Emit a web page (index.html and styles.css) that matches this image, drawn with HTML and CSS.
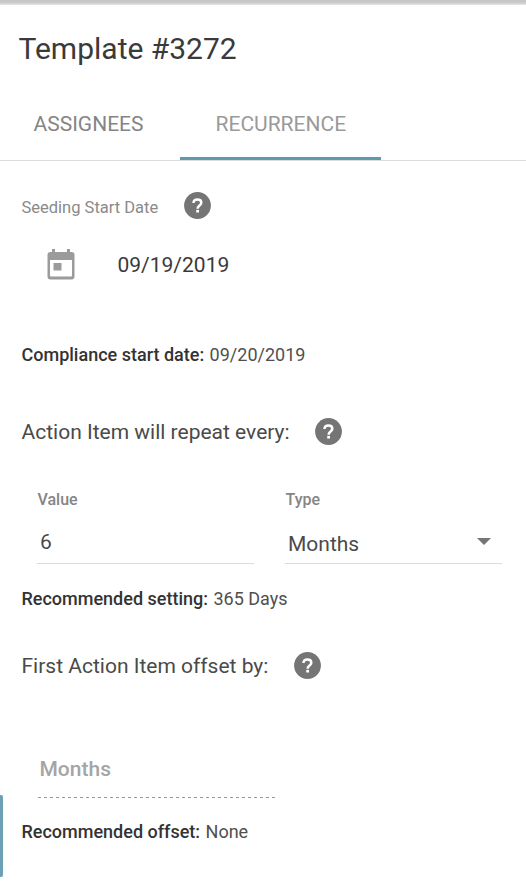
FILE: index.html
```html
<!DOCTYPE html>
<html lang="en">
  <head>
    <meta charset="UTF-8" />
    <meta name="viewport" content="width=device-width, initial-scale=1.0" />
    <title>Template #3272</title>
    <link rel="stylesheet" href="styles.css">
  </head>

  <body>
    <svg class="sprite" width="0" height="0">
      <symbol id="help" viewBox="0 0 27 27">
        <circle cx="13.5" cy="13.5" r="13.4" fill="#757575" />
        <path d="M9.500 11c0-2.200 1.600-3.500 3.900-3.500s3.900 1.200 3.900 3.200c0 2.900-3.700 2.700-3.700 6" fill="none" stroke="#fff" stroke-width="2.500" />
        <path d="M12.200 17.900h2.800v2.600h-2.800z" fill="#fff" />
      </symbol>
    </svg>

    <div class="top-shadow"></div>
    <h1 class="title"><span>Template #3272</span></h1>

    <div class="tabs">
      <div class="tab"><span>ASSIGNEES</span></div>
      <div class="tab active"><span>RECURRENCE</span></div>
    </div>

    <div class="content">
      <div class="row seeding">
        <label class="small-label">Seeding Start Date</label>
        <svg class="help"><use href="#help" /></svg>
      </div>

      <div class="row date">
        <svg class="calendar" viewBox="0 0 28 31">
          <path d="M5 0h3v3h12V0h3v3h1.500a3 3 0 0 1 3 3v21.500a3 3 0 0 1-3 3h-21a3 3 0 0 1-3-3V6a3 3 0 0 1 3-3H5zM3 11v15.500a1 1 0 0 0 1 1h20a1 1 0 0 0 1-1V11z" fill-rule="evenodd" />
          <path d="M6.500 14h8v7.500h-8z" />
        </svg>
        <span class="date-value">09/19/2019</span>
      </div>

      <p class="note compliance"><b>Compliance start date:</b> <span>09/20/2019</span></p>

      <div class="row repeat">
        <h2 class="heading">Action Item will repeat every:</h2>
        <svg class="help"><use href="#help" /></svg>
      </div>

      <div class="fields">
        <div class="field">
          <label class="field-label">Value</label>
          <div class="input"><span>6</span></div>
        </div>
        <div class="field">
          <label class="field-label">Type</label>
          <div class="input select"><span>Months</span><i class="arrow"></i></div>
        </div>
      </div>

      <p class="note setting"><b>Recommended setting:</b> <span>365 Days</span></p>

      <div class="row offset">
        <h2 class="heading">First Action Item offset by:</h2>
        <svg class="help"><use href="#help" /></svg>
      </div>

      <div class="disabled-input"><span>Months</span></div>

      <p class="note recommended"><b>Recommended offset:</b> <span>None</span></p>
    </div>

    <div class="side-tab"></div>
  </body>
</html>
```

FILE: styles.css
```css
* {
  margin: 0;
  padding: 0;
  box-sizing: border-box;
}

body {
  position: relative;
  height: 891px;
  overflow: hidden;
  background: #fff;
  color: #4a4a4a;
  font-family: Roboto, sans-serif;
}

.sprite {
  display: block;
}

.top-shadow {
  height: 5px;
  background: linear-gradient(to bottom, #c4c4c4, #cdcdcd 60%, #e8e8e8);
}

.title {
  height: 83px;
  padding: 24px 0 0 18.5px;
  font-size: 30px;
  font-weight: 400;
  line-height: 40px;
  color: #3a3a3a;
}

.tabs {
  display: flex;
  height: 73px;
  border-bottom: 1px solid #dcdcdc;
}

.tab {
  width: 180px;
  padding-left: 33.5px;
  font-size: 21px;
  line-height: 72px;
  color: #858585;
}

.tab.active {
  width: 201px;
  padding-left: 35.5px;
  border-bottom: 3px solid #5f99ad;
  color: #9a9a9a;
}

.content {
  padding-left: 21.5px;
}

.row {
  display: flex;
  align-items: center;
}

.help {
  width: 27px;
  height: 27px;
}

.seeding {
  height: 28px;
  margin-top: 30px;
  gap: 25.5px;
}

.small-label {
  padding-top: 4px;
  font-size: 16.5px;
  color: #8a8a8a;
}

.date {
  height: 40px;
  margin-top: 26px;
  padding-left: 25px;
  gap: 43px;
}

.calendar {
  width: 28px;
  height: 31px;
  margin-bottom: 2px;
  fill: #9b9b9b;
}

.date-value {
  font-size: 21px;
  color: #3a3a3a;
}

.note {
  font-size: 18px;
  line-height: 24px;
  color: #4f4f4f;
}

.note b {
  margin-right: 1px;
  font-weight: 500;
  color: #333;
}

.compliance {
  margin-top: 58px;
}

.repeat {
  height: 28px;
  margin-top: 50px;
  gap: 25px;
}

.heading {
  padding-top: 1px;
  font-size: 21px;
  font-weight: 400;
  line-height: 28px;
}

.fields {
  display: flex;
  gap: 31px;
  margin-top: 45px;
  padding-left: 15px;
}

.field {
  width: 217px;
}

.field-label {
  display: block;
  padding-left: 1px;
  font-size: 16px;
  font-weight: 500;
  line-height: 20px;
  color: #858585;
}

.input {
  display: flex;
  align-items: center;
  height: 54px;
  padding: 11px 11px 0 3.5px;
  border-bottom: 1px solid #dcdcdc;
  font-size: 21px;
}

.select {
  justify-content: space-between;
  padding-top: 14px;
}

.arrow {
  margin-bottom: 4px;
  border: 7px solid transparent;
  border-top-color: #757575;
  border-bottom: none;
}

.setting {
  margin-top: 23px;
}

.offset {
  height: 28px;
  margin-top: 40px;
  gap: 25.5px;
}

.disabled-input {
  width: 237px;
  height: 43px;
  margin: 76px 0 0 16px;
  padding-left: 2px;
  background: repeating-linear-gradient(to right, #999 0 3px, transparent 3px 6px) bottom / 100% 1px no-repeat;
  font-size: 21px;
  font-weight: 500;
  line-height: 28px;
  color: #a5a5a5;
}

.recommended {
  margin-top: 22px;
}

.side-tab {
  position: absolute;
  top: 795px;
  left: 0;
  width: 3px;
  height: 82px;
  border-radius: 0 2px 2px 0;
  background: #6ca0b5;
}
```
